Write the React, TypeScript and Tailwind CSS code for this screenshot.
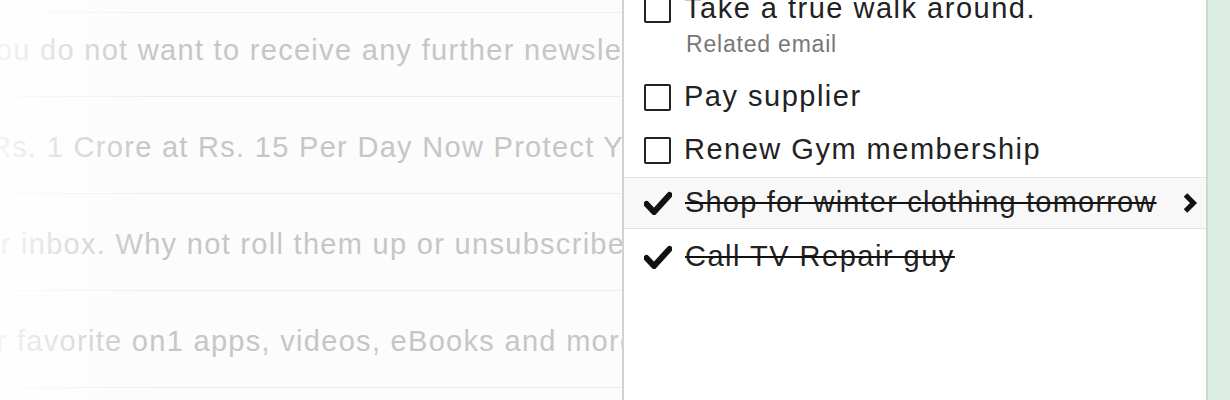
import React from "react";

const mails = [
  { text: "you do not want to receive any further newsletters from us", shift: "ml-[-20px]" },
  { text: "Rs. 1 Crore at Rs. 15 Per Day Now Protect Your Family", shift: "ml-[-10px]" },
  { text: "your inbox. Why not roll them up or unsubscribe", shift: "ml-[-50px]" },
  { text: "your favorite on1 apps, videos, eBooks and more", shift: "ml-[-54px]" },
];

function Box() {
  return <div className="w-[27px] h-[27px] shrink-0 rounded-[2px] border-2 border-[#222] bg-white" />;
}

function Check() {
  return (
    <svg width="28" height="24" viewBox="0 0 28 24" className="shrink-0">
      <path d="M2.5 13 L10 21 L25.5 4" fill="none" stroke="#111" strokeWidth="6" strokeLinecap="round" strokeLinejoin="round" />
    </svg>
  );
}

function Chevron() {
  return (
    <svg width="16" height="20" viewBox="0 0 16 20" className="shrink-0">
      <path d="M3.5 2 L11.5 10 L3.5 18" fill="none" stroke="#111" strokeWidth="5" strokeLinejoin="miter" />
    </svg>
  );
}

export default function App() {
  return (
    <div className="w-[1230px] h-[400px] overflow-hidden flex bg-white font-['Liberation_Sans',Arial,sans-serif]">
      {/* faded inbox behind the task panel */}
      <div className="relative w-[622px] shrink-0 overflow-hidden bg-[#fcfcfc]">
        <div className="ml-[15px] mt-[12px] h-px bg-[#f1f1f1]" />
        <div className="mt-[-13px] flex flex-col">
          {mails.map((m, i) => (
            <div key={i} className="h-[97px] flex flex-col">
              <div className="flex-1 flex items-center pt-[5px]">
                <span className={`${m.shift} whitespace-nowrap text-[29px] tracking-[1.3px] text-[#c6c6c6]`}>{m.text}</span>
              </div>
              <div className="ml-[15px] h-px bg-[#ededed]" />
            </div>
          ))}
        </div>
        <div className="absolute inset-y-0 left-0 w-[150px] bg-gradient-to-r from-white/80 to-transparent" />
      </div>
      <div className="w-[2px] shrink-0 bg-[#d2d2d2]" />

      {/* tasks panel */}
      <div className="w-[582px] shrink-0 bg-white text-[#222] text-[29px] tracking-[1.5px]">
        <div className="mt-[-14px] h-[46px] flex items-center gap-[13px] pl-[20px]">
          <Box />
          <span className="whitespace-nowrap">Take a true walk around.</span>
        </div>
        <div className="h-[24px] flex items-center pl-[62px] text-[23px] tracking-[0.8px] text-[#777]">Related email</div>
        <div className="mt-[15px] h-[52px] flex items-center gap-[13px] pl-[20px]">
          <Box />
          <span className="whitespace-nowrap">Pay supplier</span>
        </div>
        <div className="h-[54px] flex items-center gap-[13px] pl-[20px]">
          <Box />
          <span className="whitespace-nowrap">Renew Gym membership</span>
        </div>
        <div className="h-px bg-[#e2e2e2]" />
        <div className="h-[50px] flex items-center pl-[20px] pr-[8px] bg-[#f8f8f8]">
          <Check />
          <span className="ml-[13px] flex-1 whitespace-nowrap tracking-[1.2px] line-through decoration-2 decoration-[#111]">Shop for winter clothing tomorrow</span>
          <Chevron />
        </div>
        <div className="h-px bg-[#e2e2e2]" />
        <div className="h-[56px] flex items-center pl-[20px]">
          <Check />
          <span className="ml-[13px] whitespace-nowrap line-through decoration-2 decoration-[#111]">Call TV Repair guy</span>
        </div>
      </div>

      <div className="w-[2px] shrink-0 bg-[#c9d9cf]" />
      <div className="flex-1 bg-[#dcede3]" />
    </div>
  );
}
